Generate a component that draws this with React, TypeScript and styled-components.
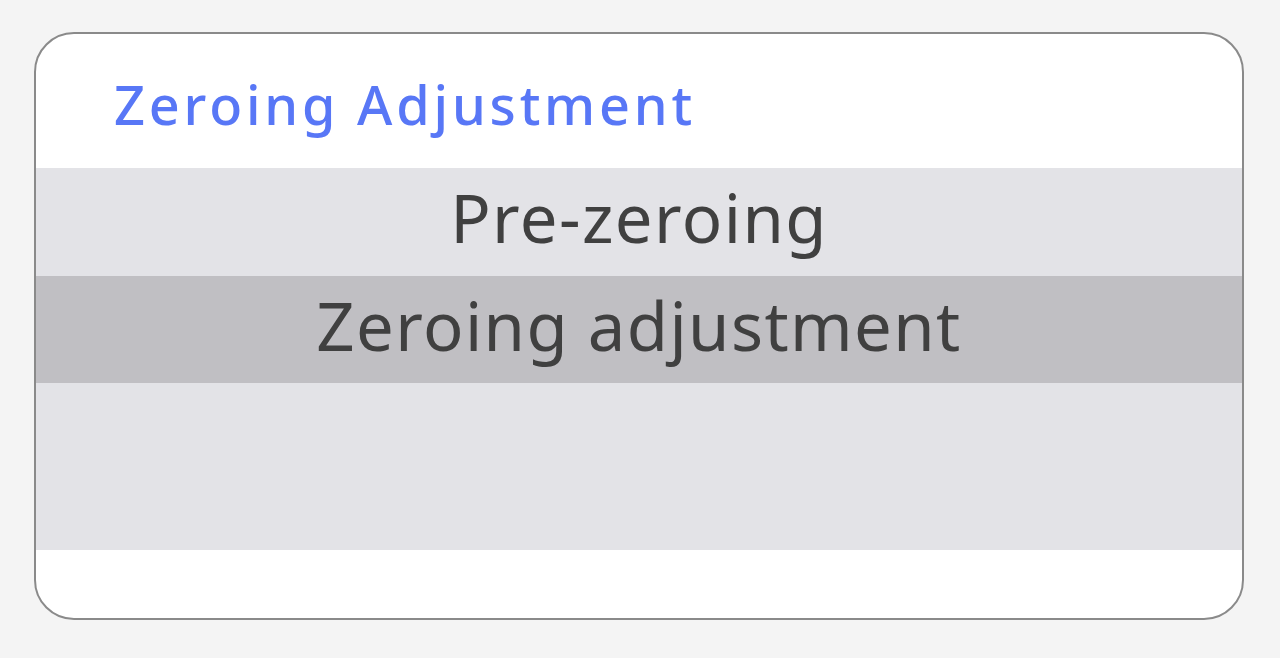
import React from 'react';
import styled, { createGlobalStyle } from 'styled-components';

const GlobalStyle = createGlobalStyle`
  html, body {
    margin: 0;
    padding: 0;
    background: #f4f4f4;
  }
  body {
    font-family: 'Noto Sans', 'Open Sans', sans-serif;
  }
`;

const Page = styled.div`
  width: 1280px;
  height: 658px;
  box-sizing: border-box;
  padding: 32px 36px 0 34px;
`;

const Card = styled.div`
  box-sizing: border-box;
  height: 588px;
  background: #ffffff;
  border: 2px solid #8a8a8a;
  border-radius: 40px;
  overflow: hidden;
  display: flex;
  flex-direction: column;
`;

const Header = styled.div`
  height: 134px;
  display: flex;
  align-items: center;
  padding-left: 78px;
  padding-top: 6px;
  box-sizing: border-box;
`;

const Title = styled.h1`
  margin: 0;
  font-size: 54px;
  font-weight: 500;
  letter-spacing: 3.8px;
  color: #5877f6;
`;

const List = styled.div`
  height: 382px;
  background: #e3e3e7;
  display: flex;
  flex-direction: column;
`;

const Option = styled.div<{ $selected?: boolean }>`
  height: ${(p) => (p.$selected ? 107 : 108)}px;
  box-sizing: border-box;
  padding-bottom: 10px;
  display: flex;
  align-items: center;
  justify-content: center;
  background: ${(p) => (p.$selected ? '#c0bfc3' : 'transparent')};
  color: #404040;
  font-size: 67px;
  font-weight: 400;
  letter-spacing: 1.4px;
`;

const options = ['Pre-zeroing', 'Zeroing adjustment'];

const App = () => {
  const selected = 1;
  return (
    <Page>
      <GlobalStyle />
      <Card>
        <Header>
          <Title>Zeroing Adjustment</Title>
        </Header>
        <List>
          {options.map((label, i) => (
            <Option key={label} $selected={i === selected}>
              {label}
            </Option>
          ))}
        </List>
      </Card>
    </Page>
  );
};

export default App;
